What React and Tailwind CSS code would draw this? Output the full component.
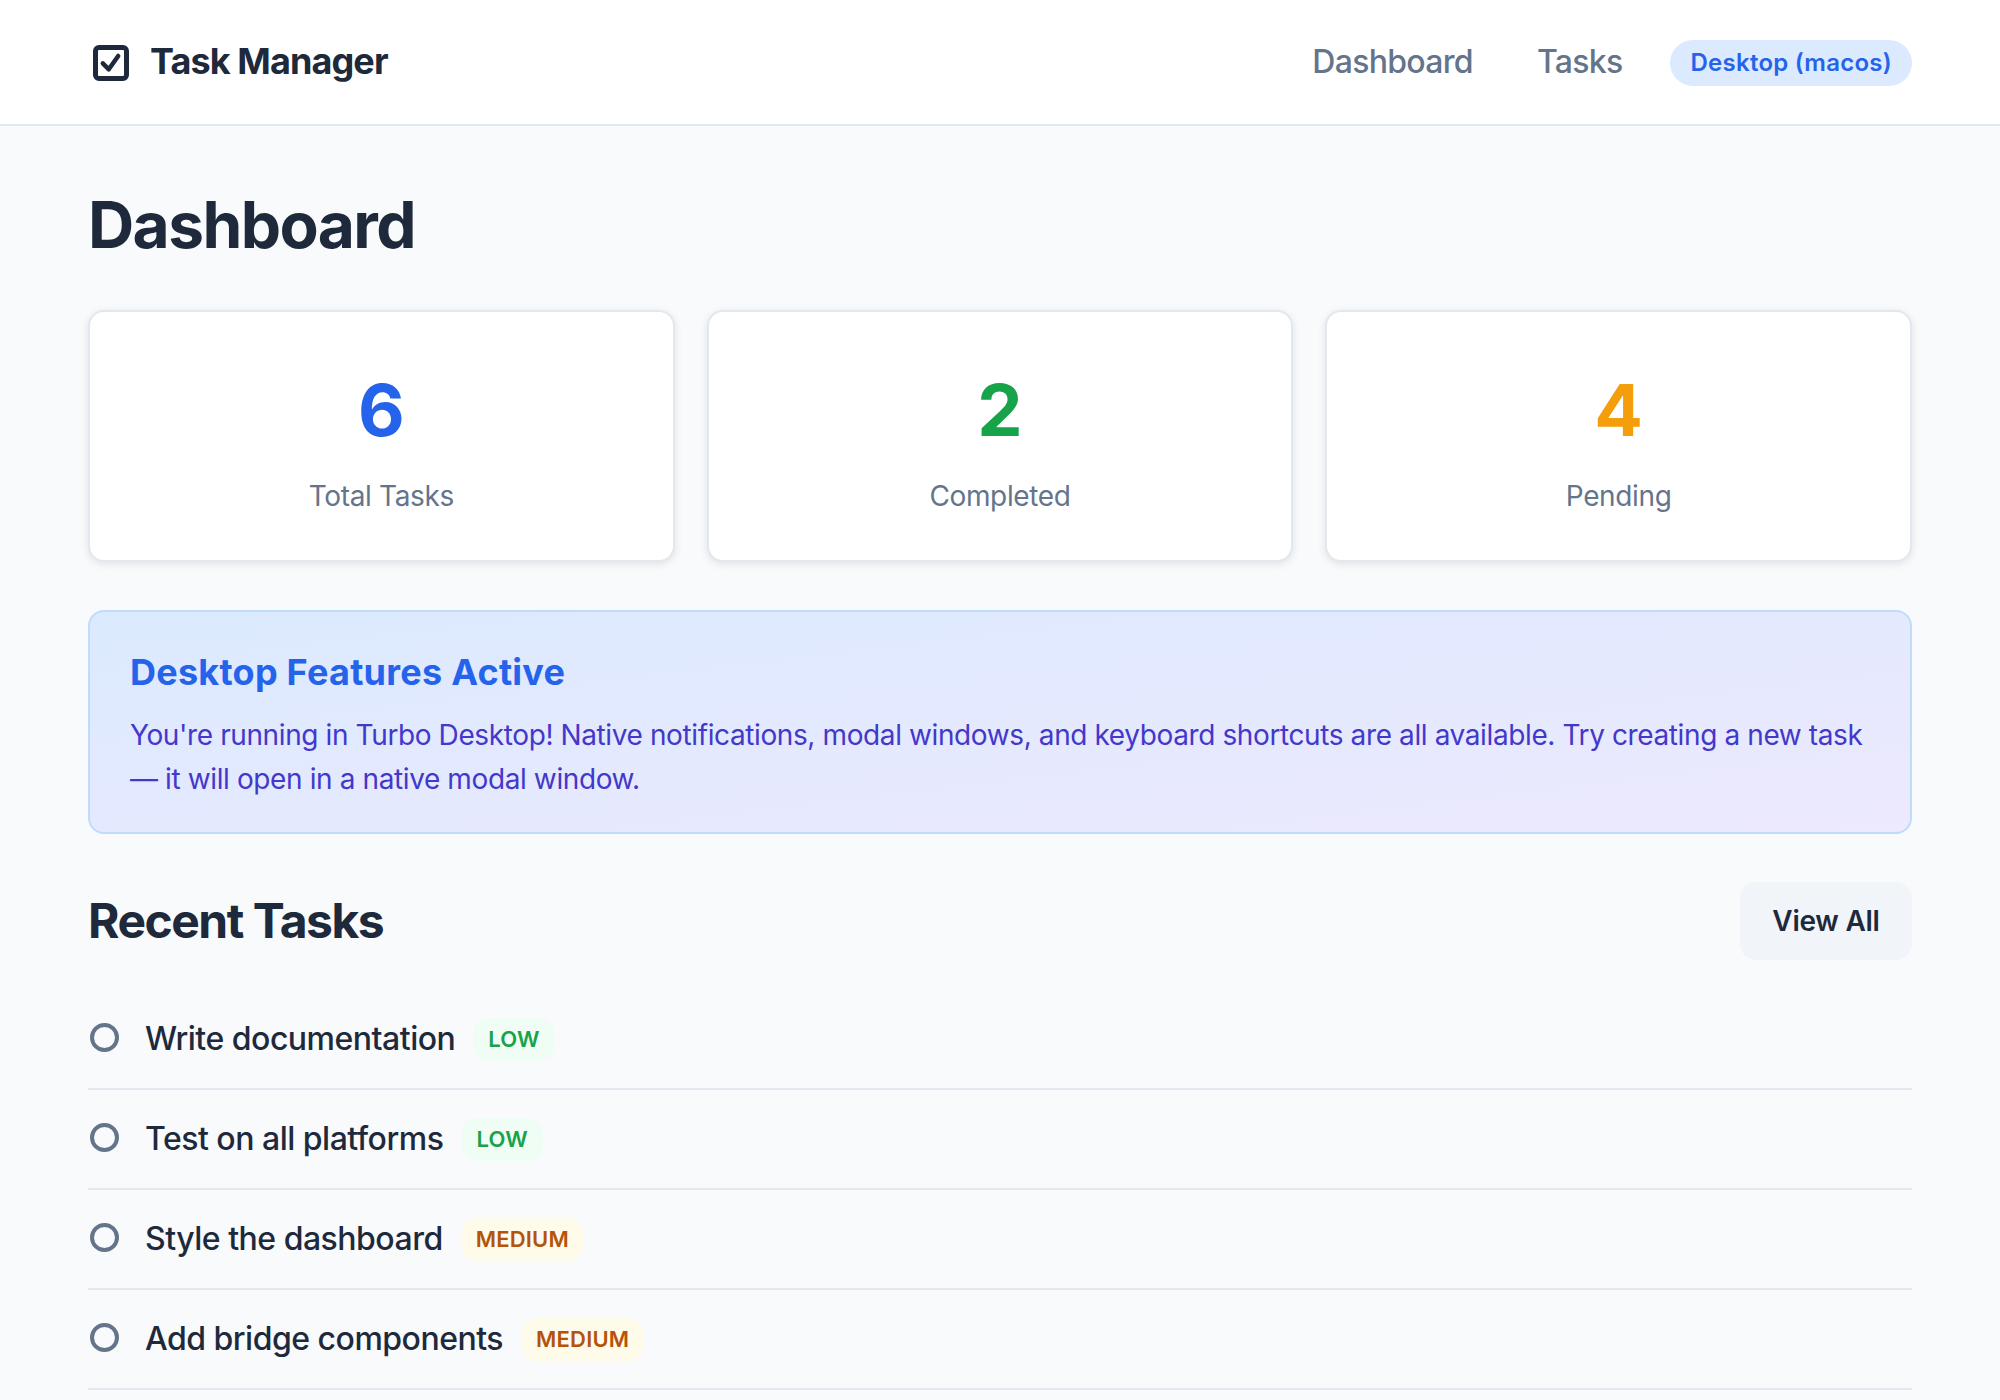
const FONT = "font-['Inter','Noto_Sans',sans-serif]";

const stats = [
  { value: '6', label: 'Total Tasks', color: 'text-[#2563eb]' },
  { value: '2', label: 'Completed', color: 'text-[#16a34a]' },
  { value: '4', label: 'Pending', color: 'text-[#f59e0b]' },
];

const tasks = [
  { title: 'Write documentation', priority: 'low' },
  { title: 'Test on all platforms', priority: 'low' },
  { title: 'Style the dashboard', priority: 'medium' },
  { title: 'Add bridge components', priority: 'medium' },
];

const BADGE = {
  low: 'bg-[#f0fdf4] text-[#16a34a]',
  medium: 'bg-[#fffbeb] text-[#b45309]',
};

function Logo() {
  return (
    <svg width="36" height="36" viewBox="0 0 36 36" fill="none" className="ml-[4.5px] mt-[2px] text-[#1e293b]">
      <rect x="2.5" y="2.5" width="31" height="31" rx="3.5" stroke="currentColor" strokeWidth="5" />
      <path d="M9.8 18.3 L15.8 24.3 L25.2 11" stroke="currentColor" strokeWidth="4.5" strokeLinecap="round" strokeLinejoin="round" />
    </svg>
  );
}

function TaskRow({ title, priority }) {
  return (
    <div className="flex items-center h-[100px] border-b-2 border-[#e2e8f0]">
      <div className="w-[29px] h-[29px] ml-[2px] -mt-[3px] rounded-full border-[4px] border-[#64748b]" />
      <span className="ml-[26px] text-[32px] leading-[48px] font-medium tracking-[-0.5px] text-[#1e293b]">{title}</span>
      <span className={`ml-[18px] px-[15px] py-[4px] rounded-[16px] text-[22px] leading-[35px] font-semibold tracking-[0.2px] uppercase ${BADGE[priority]}`}>
        {priority}
      </span>
    </div>
  );
}

export default function App() {
  return (
    <div className={`min-h-screen bg-[#f8fafc] ${FONT}`}>
      <header className="flex items-center justify-between h-[126px] px-[88px] bg-white border-b-2 border-[#e2e8f0]">
        <div className="flex items-center gap-[21.5px]">
          <Logo />
          <span className="mb-[2px] text-[36px] font-bold tracking-[-0.9px] text-[#1e293b]">Task Manager</span>
        </div>
        <nav className="flex items-center">
          <a className="text-[32px] font-medium tracking-[-0.7px] text-[#64748b]">Dashboard</a>
          <a className="ml-[64px] text-[32px] font-medium tracking-[-0.7px] text-[#64748b]">Tasks</a>
          <span className="ml-[48px] mt-[2px] px-[20px] py-[6px] rounded-full bg-[#dbeafe] text-[24px] leading-[34px] font-semibold tracking-[0.26px] text-[#2563eb]">
            Desktop (macos)
          </span>
        </nav>
      </header>

      <main className="px-[88px] pt-[48px]">
        <h1 className="text-[64px] leading-[102px] font-bold tracking-[-1.6px] text-[#1e293b]">Dashboard</h1>

        <div className="grid grid-cols-3 gap-[32px] mt-[34px]">
          {stats.map((s) => (
            <div key={s.label} className="flex flex-col items-center h-[252px] pt-[44px] bg-white border-2 border-[#e2e8f0] rounded-[16px] shadow-[0_2px_8px_rgba(0,0,0,0.1)]">
              <div className={`text-[72px] leading-[108px] font-bold ${s.color}`}>{s.value}</div>
              <div className="mt-[11px] text-[28px] leading-[42px] tracking-[-0.35px] text-[#64748b]">{s.label}</div>
            </div>
          ))}
        </div>

        <section className="mt-[48px] h-[224px] px-[40px] pt-[33px] rounded-[16px] border-2 border-[#bfdbfe] bg-gradient-to-br from-[#dbeafe] to-[#ede9fe]">
          <h3 className="text-[36px] leading-[54px] font-bold tracking-[0.25px] text-[#2563eb]">Desktop Features Active</h3>
          <p className="mt-[14px] text-[28px] leading-[44px] tracking-[-0.39px] text-[#4338ca]">
            You're running in Turbo Desktop! Native notifications, modal windows, and keyboard shortcuts are all available. Try creating a new task — it will open in a native modal window.
          </p>
        </section>

        <div className="flex items-center justify-between mt-[48px] mb-[30px]">
          <h2 className="text-[48px] leading-[72px] font-bold tracking-[-1.5px] text-[#1e293b]">Recent Tasks</h2>
          <button className="w-[172px] h-[78px] rounded-[16px] bg-[#f1f5f9] text-[28px] font-semibold tracking-[-0.25px] text-[#1e293b]">View All</button>
        </div>

        <div>
          {tasks.map((t) => (
            <TaskRow key={t.title} {...t} />
          ))}
        </div>
      </main>
    </div>
  );
}
